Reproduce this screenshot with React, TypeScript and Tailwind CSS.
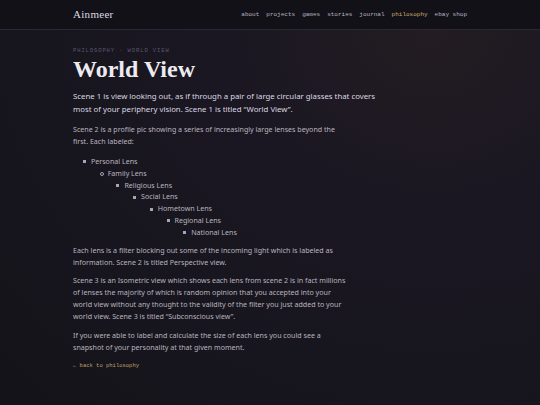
export default function App() {
  const nav = ['about', 'projects', 'games', 'stories', 'journal', 'philosophy', 'ebay shop'];
  const lenses = [
    'Personal Lens',
    'Family Lens',
    'Religious Lens',
    'Social Lens',
    'Hometown Lens',
    'Regional Lens',
    'National Lens',
  ];

  return (
    <div className="w-[540px] h-[405px] overflow-hidden antialiased bg-[#141319] font-['Noto_Sans',sans-serif] flex flex-col">
      <header className="h-[30px] shrink-0 bg-[#121118] border-b border-[#2a2834]">
        <div className="w-[394px] mx-auto h-full flex items-center justify-between">
          <span className="font-['Liberation_Serif',serif] text-[11px] text-[#dcdae2] tracking-[0.3px]">Ainmeer</span>
          <nav className="flex gap-[7px] font-['Liberation_Mono',monospace] text-[6px] text-[#b8b4c2]">
            {nav.map((n) => (
              <span key={n} className={n === 'philosophy' ? 'text-[#c9ab6e]' : ''}>
                {n}
              </span>
            ))}
          </nav>
        </div>
      </header>

      <main className="flex-1 bg-[radial-gradient(ellipse_at_80%_0%,#231c22_0%,#1a1722_35%,#141319_100%)]">
        <div className="w-[394px] mx-auto pt-[17px]">
          <div className="font-['Liberation_Mono',monospace] text-[5.5px] tracking-[0.9px] text-[#5c5873] uppercase leading-[7px]">
            philosophy · world view
          </div>
          <h1 className="font-['Liberation_Serif',serif] font-bold text-[24px] leading-[26px] mt-[2px] text-[#ecebf0]">
            World View
          </h1>

          <div className="mt-[8px] text-[#b9b4bf]">
            <p className="w-[306px] text-[7.8px] leading-[13px] text-[#dcd8e1]">
              Scene 1 is view looking out, as if through a pair of large circular glasses that covers most of your periphery vision. Scene 1 is titled “World View”.
            </p>
            <p className="w-[277px] text-[7.1px] leading-[12px] mt-[7px]">
              Scene 2 is a profile pic showing a series of increasingly large lenses beyond the first. Each labeled:
            </p>
            <ul className="text-[7.1px] leading-[11.8px] mt-[9px]">
              {lenses.map((l, i) => (
                <li key={l} className="flex items-center" style={{ paddingLeft: 10 + i * 16.7 }}>
                  <span
                    className={
                      i === 1
                        ? 'w-[4px] h-[4px] rounded-full border border-[#a9a4b0] mr-[4px]'
                        : 'w-[3px] h-[3px] bg-[#a9a4b0] mr-[5px]'
                    }
                  />
                  {l}
                </li>
              ))}
            </ul>
            <p className="w-[277px] text-[7.1px] leading-[12px] mt-[5px]">
              Each lens is a filter blocking out some of the incoming light which is labeled as information. Scene 2 is titled Perspective view.
            </p>
            <p className="w-[277px] text-[7.1px] leading-[12px] mt-[6px]">
              Scene 3 is an Isometric view which shows each lens from scene 2 is in fact millions of lenses the majority of which is random opinion that you accepted into your world view without any thought to the validity of the filter you just added to your world view. Scene 3 is titled “Subconscious view”.
            </p>
            <p className="w-[277px] text-[7.1px] leading-[12px] mt-[7px]">
              If you were able to label and calculate the size of each lens you could see a snapshot of your personality at that given moment.
            </p>
            <div className="mt-[9px] font-['Liberation_Mono',monospace] text-[5.5px] text-[#bfa06a]">
              ← back to philosophy
            </div>
          </div>
        </div>
      </main>
    </div>
  );
}
